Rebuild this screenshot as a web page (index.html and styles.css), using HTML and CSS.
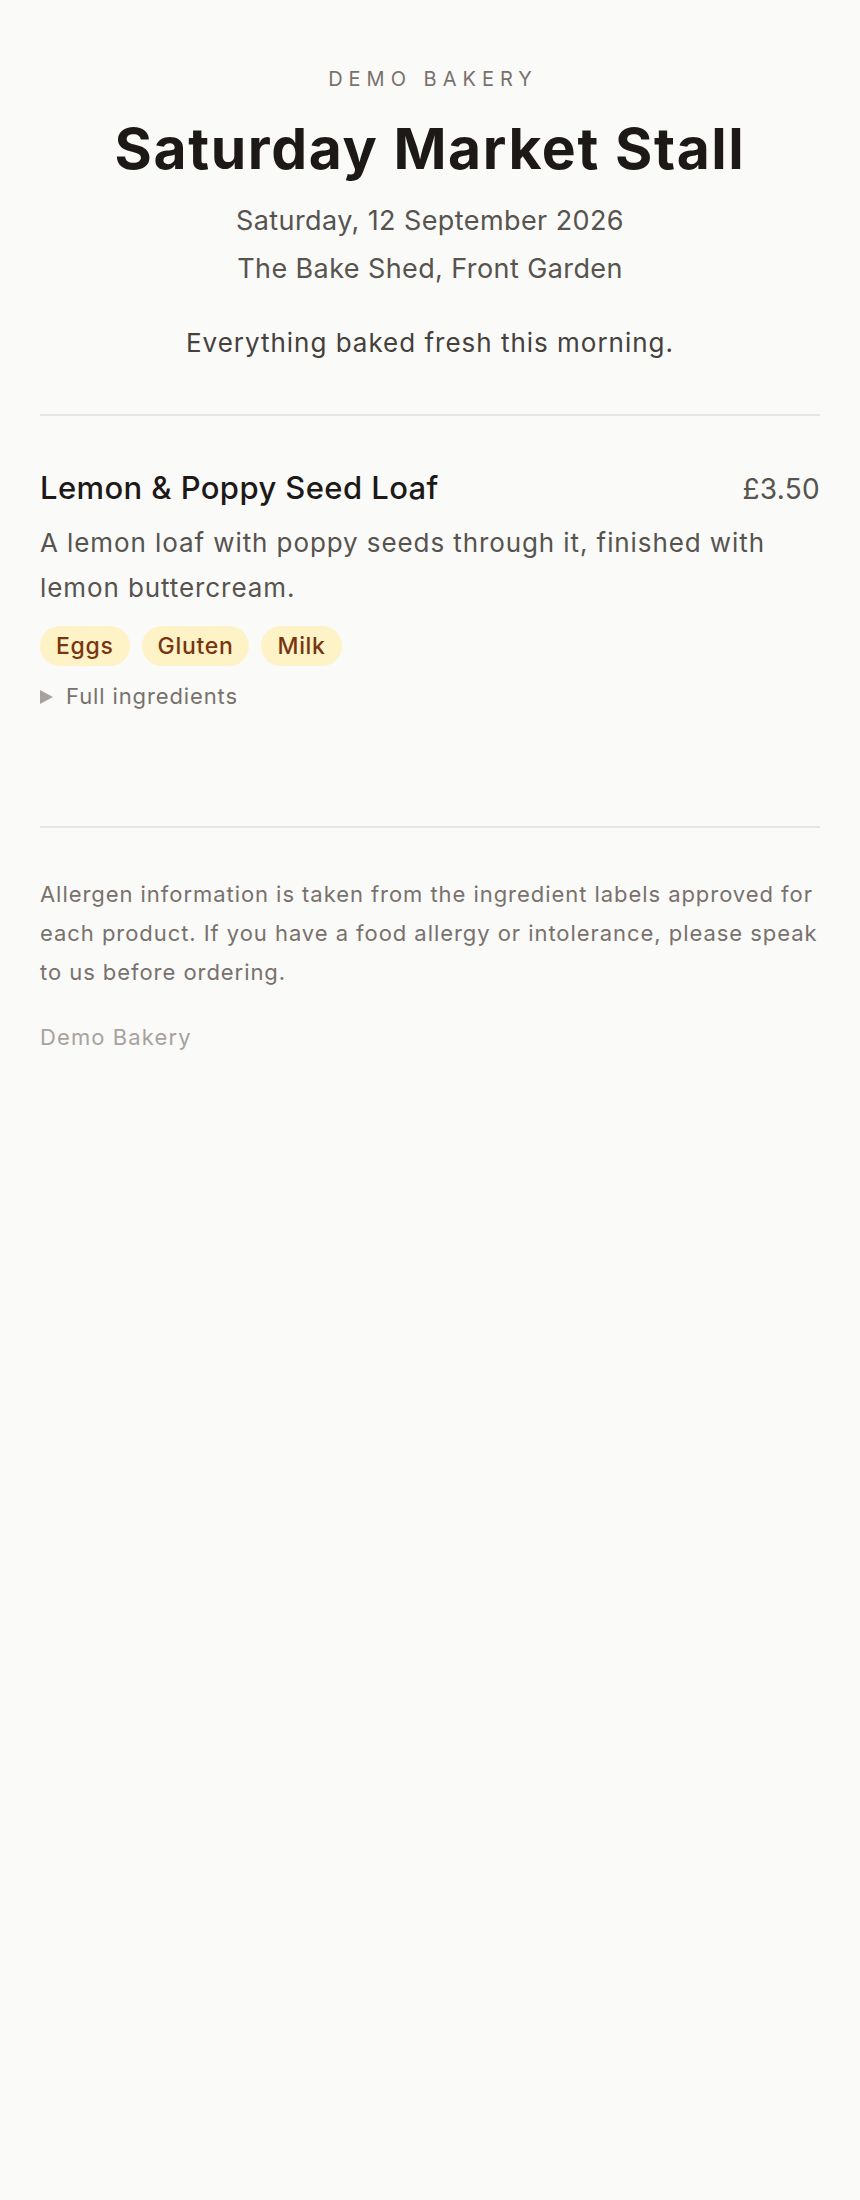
FILE: index.html
```html
<!DOCTYPE html>
<html lang="en">
<head>
    <meta charset="UTF-8">
    <meta name="viewport" content="width=device-width, initial-scale=1.0">
    <title>Saturday Market Stall - Demo Bakery</title>
    <link rel="stylesheet" href="styles.css">
</head>
<body>
    <main class="page">
        <header class="stall-header">
            <p class="brand">Demo Bakery</p>
            <h1>Saturday Market Stall</h1>
            <p class="meta">Saturday, 12 September 2026</p>
            <p class="meta">The Bake Shed, Front Garden</p>
            <p class="intro">Everything baked fresh this morning.</p>
        </header>

        <section class="products">
            <article class="product">
                <div class="product-head">
                    <h2>Lemon &amp; Poppy Seed Loaf</h2>
                    <span class="price">£3.50</span>
                </div>
                <p class="description">A lemon loaf with poppy seeds through it, finished with lemon buttercream.</p>
                <ul class="allergens">
                    <li>Eggs</li>
                    <li>Gluten</li>
                    <li>Milk</li>
                </ul>
                <details class="ingredients">
                    <summary>Full ingredients</summary>
                    <p>Wheat flour (gluten), butter (milk), sugar, free range eggs, icing sugar, lemon juice, lemon zest, poppy seeds, baking powder.</p>
                </details>
            </article>
        </section>

        <footer class="stall-footer">
            <p class="notice">Allergen information is taken from the ingredient labels approved for each product. If you have a food allergy or intolerance, please speak to us before ordering.</p>
            <p class="signoff">Demo Bakery</p>
        </footer>
    </main>
</body>
</html>
```

FILE: styles.css
```css
body {
    margin: 0;
    background-color: #fafaf9;
    color: #44403c;
    font-family: Inter, "Noto Sans", sans-serif;
}
p {
    margin: 0;
}
.page {
    max-width: 780px;
    margin: 0 auto;
    padding: 64px 40px 80px;
}
.stall-header {
    text-align: center;
    padding-bottom: 52px;
    border-bottom: 2px solid #e7e5e4;
}
.brand {
    font-size: 20px;
    line-height: 30px;
    letter-spacing: 0.3em;
    text-transform: uppercase;
    color: #78716c;
    margin-right: -0.3em;
}
.stall-header h1 {
    margin: 22px 0 15px;
    font-size: 57px;
    line-height: 66px;
    font-weight: 700;
    letter-spacing: 0.028em;
    color: #1c1917;
}
.meta {
    font-size: 27px;
    line-height: 48px;
    letter-spacing: 0.015em;
    color: #57534e;
}
.intro {
    margin-top: 30px;
    font-size: 26px;
    line-height: 39px;
    letter-spacing: 0.038em;
    color: #44403c;
}
.products {
    border-bottom: 2px solid #e7e5e4;
}
.product {
    padding: 52px 0 113px;
}
.product-head {
    display: flex;
    justify-content: space-between;
    align-items: baseline;
    gap: 20px;
}
.product-head h2 {
    margin: 0;
    font-size: 31px;
    line-height: 1.3;
    font-weight: 500;
    letter-spacing: 0.013em;
    color: #1c1917;
}
.price {
    font-size: 28px;
    letter-spacing: 0.01em;
    color: #57534e;
}
.description {
    margin-top: 12px;
    font-size: 26px;
    line-height: 45px;
    letter-spacing: 0.035em;
    color: #57534e;
}
.allergens {
    display: flex;
    flex-wrap: wrap;
    gap: 12px;
    list-style: none;
    margin: 16px 0 0;
    padding: 0;
}
.allergens li {
    padding: 4px 16px;
    font-size: 23px;
    line-height: 32px;
    font-weight: 500;
    letter-spacing: 0.03em;
    color: #78350f;
    background-color: #fef3c7;
    border-radius: 999px;
}
.ingredients {
    margin-top: 14px;
    font-size: 22px;
    line-height: 33px;
    letter-spacing: 0.04em;
    color: #78716c;
}
.ingredients summary {
    display: flex;
    align-items: center;
    gap: 13px;
    list-style: none;
    cursor: pointer;
}
.ingredients summary::-webkit-details-marker {
    display: none;
}
.ingredients summary::before {
    content: "";
    border-left: 13px solid #a8a29e;
    border-top: 7.5px solid transparent;
    border-bottom: 7.5px solid transparent;
}
.ingredients p {
    margin-top: 8px;
}
.stall-footer {
    padding-top: 47px;
}
.notice {
    font-size: 22px;
    line-height: 38.8px;
    letter-spacing: 0.043em;
    color: #78716c;
}
.signoff {
    margin-top: 29px;
    font-size: 22px;
    line-height: 33px;
    letter-spacing: 0.05em;
    color: #a8a29e;
}
```
